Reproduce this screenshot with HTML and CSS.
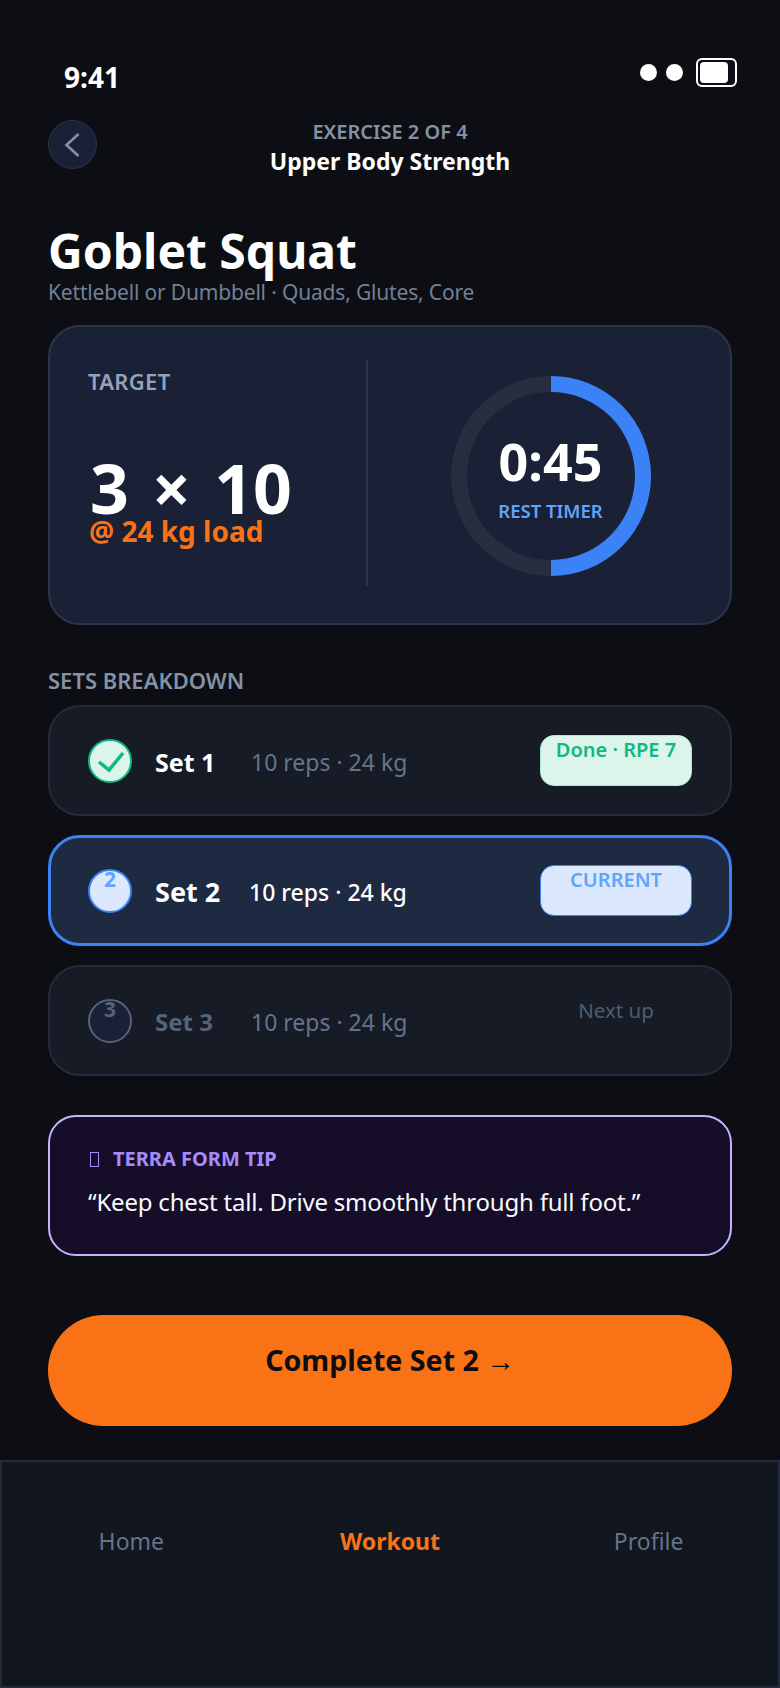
FILE: index.html
```html
<!DOCTYPE html>
<html lang="en">
<head>
    <meta charset="UTF-8">
    <meta name="viewport" content="width=device-width, initial-scale=1.0">
    <title>Goblet Squat</title>
    <link rel="stylesheet" href="styles.css">
</head>
<body>
    <div class="status-bar">
        <span class="time">9:41</span>
        <div class="status-icons">
            <span class="dot"></span>
            <span class="dot"></span>
            <span class="battery"><span class="battery-fill"></span></span>
        </div>
    </div>

    <header class="top-nav">
        <button class="back-btn" aria-label="Back">
            <svg width="20" height="24" viewBox="0 0 20 24" fill="none" stroke="#8492a6" stroke-width="2.6">
                <path d="M15.5 1 L3.5 12 L15.5 23"/>
            </svg>
        </button>
        <div class="top-title">
            <div class="eyebrow">EXERCISE 2 OF 4</div>
            <div class="workout-name">Upper Body Strength</div>
        </div>
    </header>

    <main class="content">
        <h1>Goblet Squat</h1>
        <p class="subtitle">Kettlebell or Dumbbell · Quads, Glutes, Core</p>

        <section class="hero-card">
            <div class="target">
                <div class="target-label">TARGET</div>
                <div class="target-value">3 × 10</div>
                <div class="target-load">@ 24 kg load</div>
            </div>
            <div class="timer-side">
                <div class="ring">
                    <svg width="200" height="200" viewBox="0 0 200 200" fill="none">
                        <circle cx="100" cy="100" r="92" stroke="#252f3f" stroke-width="16"/>
                        <path d="M100 8 A92 92 0 0 1 100 192" stroke="#3b82f6" stroke-width="16"/>
                    </svg>
                    <div class="ring-text">
                        <div class="ring-time">0:45</div>
                        <div class="ring-label">REST TIMER</div>
                    </div>
                </div>
            </div>
        </section>

        <h2 class="section-title">SETS BREAKDOWN</h2>
        <div class="set-list">
            <div class="set-row done">
                <span class="set-mark">
                    <svg width="28" height="22" viewBox="0 0 28 22" fill="none" stroke="#10b981" stroke-width="3.5">
                        <path d="M3 11 L13 19 L27 2"/>
                    </svg>
                </span>
                <span class="set-name">Set 1</span>
                <span class="set-detail">10 reps · 24 kg</span>
                <span class="set-badge">Done · RPE 7</span>
            </div>
            <div class="set-row current">
                <span class="set-mark">2</span>
                <span class="set-name">Set 2</span>
                <span class="set-detail">10 reps · 24 kg</span>
                <span class="set-badge">CURRENT</span>
            </div>
            <div class="set-row upcoming">
                <span class="set-mark">3</span>
                <span class="set-name">Set 3</span>
                <span class="set-detail">10 reps · 24 kg</span>
                <span class="set-badge">Next up</span>
            </div>
        </div>

        <section class="tip-card">
            <div class="tip-title"><span class="tip-icon"></span>TERRA FORM TIP</div>
            <p class="tip-text">“Keep chest tall. Drive smoothly through full foot.”</p>
        </section>

        <button class="complete-btn">Complete Set 2 →</button>
    </main>

    <nav class="bottom-nav">
        <a class="nav-item">Home</a>
        <a class="nav-item active">Workout</a>
        <a class="nav-item">Profile</a>
    </nav>
</body>
</html>
```

FILE: styles.css
```css
* {
    box-sizing: border-box;
}
html, body {
    height: 100%;
}
body {
    margin: 0;
    height: 1688px;
    overflow: hidden;
    display: flex;
    flex-direction: column;
    background-color: #0c0e14;
    color: #fff;
    font-family: "Noto Sans", sans-serif;
}

/* status bar */
.status-bar {
    height: 120px;
    padding: 58px 43px 0 64px;
    display: flex;
    justify-content: space-between;
    align-items: flex-start;
}
.time {
    font-size: 28px;
    font-weight: 700;
    line-height: 38px;
}
.status-icons {
    display: flex;
    align-items: center;
    gap: 9px;
}
.dot {
    width: 17px;
    height: 17px;
    border-radius: 50%;
    background-color: #fff;
}
.battery {
    width: 41px;
    height: 29px;
    margin-left: 4px;
    padding: 2px;
    border: 2px solid #fff;
    border-radius: 6px;
    display: block;
}
.battery-fill {
    display: block;
    width: 28px;
    height: 21px;
    background-color: #fff;
    border-radius: 4px;
}

/* header */
.top-nav {
    position: relative;
    height: 60px;
    padding: 0 48px;
}
.back-btn {
    width: 49px;
    height: 49px;
    padding: 0;
    border: 1px solid #2a3548;
    border-radius: 50%;
    background-color: #1a2035;
    display: flex;
    align-items: center;
    justify-content: center;
}
.top-title {
    position: absolute;
    left: 0;
    right: 0;
    top: 0;
    text-align: center;
}
.eyebrow {
    font-size: 20px;
    font-weight: 600;
    line-height: 24px;
    color: #8492a6;
}
.workout-name {
    font-size: 23px;
    font-weight: 700;
    line-height: 34px;
}

/* main */
.content {
    padding: 0 48px;
}
h1 {
    margin: 44px 0 0;
    font-size: 48px;
    font-weight: 700;
    line-height: 54px;
}
.subtitle {
    margin: 0;
    font-size: 21px;
    letter-spacing: -0.17px;
    line-height: 28px;
    color: #718096;
}

.hero-card {
    margin-top: 19px;
    height: 300px;
    padding: 33px 0 37px 38px;
    border: 2px solid #2a3548;
    border-radius: 32px;
    background-color: #1a2035;
    display: flex;
}
.target {
    width: 278px;
    padding-top: 1px;
}
.target-label {
    font-size: 22px;
    font-weight: 600;
    letter-spacing: 0.3px;
    line-height: 40px;
    color: #94a3b8;
}
.target-value {
    margin-top: 66px;
    padding-left: 2px;
    font-size: 68px;
    font-weight: 700;
    word-spacing: 5.5px;
    line-height: 42px;
}
.target-load {
    margin-top: 4px;
    padding-left: 1px;
    font-size: 28px;
    font-weight: 700;
    line-height: 36px;
    color: #f97316;
}
.timer-side {
    flex: 1;
    padding: 5px 0 0 3px;
    border-left: 2px solid #2a3548;
    display: flex;
    justify-content: center;
    align-items: center;
}
.ring {
    position: relative;
    width: 200px;
    height: 200px;
}
.ring svg {
    display: block;
}
.ring-text {
    position: absolute;
    inset: 0;
    text-align: center;
    padding-top: 50px;
}
.ring-time {
    font-size: 52px;
    font-weight: 700;
    line-height: 70px;
}
.ring-label {
    margin-top: 3px;
    font-size: 18.5px;
    font-weight: 600;
    line-height: 24px;
    color: #60a5fa;
}

.section-title {
    margin: 41px 0 0;
    font-size: 22px;
    font-weight: 600;
    line-height: 28px;
    color: #8492a6;
}
.set-list {
    margin-top: 11px;
    display: flex;
    flex-direction: column;
    gap: 19px;
}
.set-row {
    height: 111px;
    padding: 0 38px;
    border: 2px solid #232b3b;
    border-radius: 32px;
    background-color: #161b26;
    display: flex;
    align-items: center;
}
.set-mark {
    width: 44px;
    height: 44px;
    flex-shrink: 0;
    border: 2px solid;
    border-radius: 50%;
    font-size: 21px;
    font-weight: 700;
    line-height: 16px;
    text-align: center;
    display: block;
}
.set-mark svg {
    display: block;
    margin: 10px 0 0 6px;
}
.set-name {
    width: 96px;
    margin: 2px 0 0 23px;
    flex-shrink: 0;
    font-size: 25px;
    font-weight: 700;
}
.set-detail {
    margin-top: 2px;
    font-size: 23px;
    color: #64748b;
}
.set-badge {
    margin-left: auto;
    width: 152px;
    height: 51px;
    padding-top: 1px;
    border: 1px solid;
    border-radius: 14px;
    font-size: 20px;
    font-weight: 600;
    line-height: 26px;
    text-align: center;
    display: block;
}

.done .set-mark {
    border-color: #10b981;
    background-color: #dcf5ea;
}
.done .set-badge {
    border-color: #b5e6d3;
    background-color: #dcf5ea;
    color: #10b981;
}
.current {
    padding: 0 37px;
    border: 3px solid #3b82f6;
    background-color: #1e2942;
}
.current .set-mark {
    border-color: #3b82f6;
    background-color: #dbe8fe;
    color: #60a5fa;
}
.current .set-name {
    font-size: 27px;
}
.current .set-detail {
    color: #fff;
    font-weight: 500;
    margin-left: -2px;
}
.current .set-badge {
    border-color: #3b82f6;
    background-color: #dbe8fe;
    color: #60a5fa;
}
.upcoming .set-mark {
    border-color: #566378;
    background-color: #1a2035;
    color: #566378;
}
.upcoming .set-name {
    font-size: 24px;
    color: #566378;
}
.upcoming .set-badge {
    border-color: transparent;
    color: #4f5c72;
    font-weight: 400;
    font-size: 20.5px;
}

.tip-card {
    margin-top: 39px;
    height: 141px;
    padding: 27px 38px;
    border: 2px solid #c4b5fd;
    border-radius: 28px;
    background-color: #160e28;
}
.tip-title {
    font-size: 20px;
    font-weight: 700;
    line-height: 30px;
    color: #a78bfa;
    display: flex;
    align-items: center;
}
/* missing-glyph box in front of the tip title */
.tip-icon {
    width: 9px;
    height: 15px;
    margin: 0 14px 0 2px;
    border: 1px solid #a78bfa;
}
.tip-text {
    margin: 10px 0 0;
    font-size: 24px;
    letter-spacing: -0.2px;
    line-height: 36px;
    color: #f8fafc;
}

.complete-btn {
    margin-top: 59px;
    width: 100%;
    height: 111px;
    padding: 0 0 22px;
    border: none;
    border-radius: 56px;
    background-color: #f97316;
    color: #0c0e14;
    font-family: inherit;
    font-size: 28.6px;
    font-weight: 700;
}

/* bottom nav */
.bottom-nav {
    margin-top: auto;
    height: 228px;
    padding-top: 62px;
    border: 2px solid #232c3d;
    background-color: #12161f;
    display: grid;
    grid-template-columns: 1fr 1fr 1fr;
    align-items: start;
    text-align: center;
}
.nav-item {
    font-size: 23px;
    line-height: 34px;
    color: #64748b;
}
.nav-item.active {
    color: #f97316;
    font-weight: 700;
}
```
